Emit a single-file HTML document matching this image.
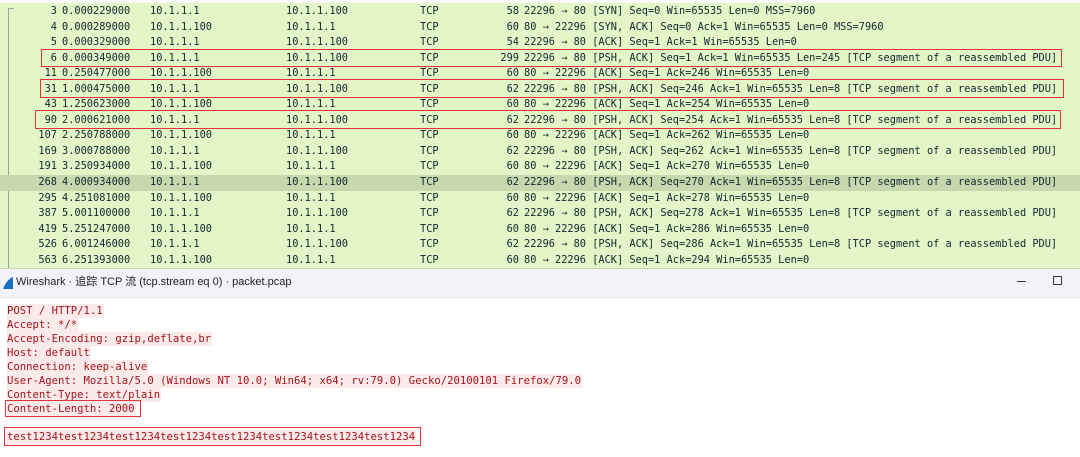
<!DOCTYPE html>
<html><head><meta charset="utf-8"><style>
body{margin:0;width:1080px;height:456px;overflow:hidden;background:#fff;position:relative;font-family:"DejaVu Sans Mono","Liberation Mono",monospace;}
#top{position:absolute;left:0;top:0;width:1080px;height:268px;background:#e3f6c8;border-bottom:1px solid #c8d2bc}
#hdr{position:absolute;left:0;top:0;width:1080px;height:3px;background:#fafafa}
#rows{position:absolute;left:0;top:2px;width:1080px;height:266px}
.r{position:absolute;left:0;width:1080px;height:15.5px;font-size:10.3px;line-height:15.5px;color:#12272e;white-space:pre}
.r span{position:absolute;top:0}
.n{right:1023px;text-align:right}
.t{left:62px}.s{left:150px}.d{left:286px}.p{left:420px}
.l{right:561px;text-align:right}.i{left:524px}
.hl{background:#c6d9ae}
.box{position:absolute;border:1.5px solid #e0333a;box-sizing:border-box}
#tree{position:absolute;left:8px;top:8px;width:1px;height:260px;background:#9aa49a}
#tree2{position:absolute;left:8px;top:8px;width:6px;height:1px;background:#9aa49a}
#title{position:absolute;left:0;top:269px;width:1080px;height:30px;background:#f1f3f9;font-family:"Liberation Sans","Noto Sans CJK SC",sans-serif;font-size:11px;color:#222}
#title .tx{position:absolute;left:16px;top:4px}
.ln{position:absolute;left:7px;font-size:10.6px;line-height:14px;height:14px;color:#a3141c;background:#fbeaea;white-space:pre;padding-right:1px}
#bot{position:absolute;left:0;top:1px;width:1080px;height:456px}
</style></head><body>
<div id="top"></div><div id="hdr"></div>
<div id="tree"></div><div id="tree2"></div>
<div id="rows">
<div class="r" style="top:2px"><span class="n">3</span><span class="t">0.000229000</span><span class="s">10.1.1.1</span><span class="d">10.1.1.100</span><span class="p">TCP</span><span class="l">58</span><span class="i">22296 → 80 [SYN] Seq=0 Win=65535 Len=0 MSS=7960</span></div>
<div class="r" style="top:17.5px"><span class="n">4</span><span class="t">0.000289000</span><span class="s">10.1.1.100</span><span class="d">10.1.1.1</span><span class="p">TCP</span><span class="l">60</span><span class="i">80 → 22296 [SYN, ACK] Seq=0 Ack=1 Win=65535 Len=0 MSS=7960</span></div>
<div class="r" style="top:33px"><span class="n">5</span><span class="t">0.000329000</span><span class="s">10.1.1.1</span><span class="d">10.1.1.100</span><span class="p">TCP</span><span class="l">54</span><span class="i">22296 → 80 [ACK] Seq=1 Ack=1 Win=65535 Len=0</span></div>
<div class="r" style="top:48.5px"><span class="n">6</span><span class="t">0.000349000</span><span class="s">10.1.1.1</span><span class="d">10.1.1.100</span><span class="p">TCP</span><span class="l">299</span><span class="i">22296 → 80 [PSH, ACK] Seq=1 Ack=1 Win=65535 Len=245 [TCP segment of a reassembled PDU]</span></div>
<div class="r" style="top:64px"><span class="n">11</span><span class="t">0.250477000</span><span class="s">10.1.1.100</span><span class="d">10.1.1.1</span><span class="p">TCP</span><span class="l">60</span><span class="i">80 → 22296 [ACK] Seq=1 Ack=246 Win=65535 Len=0</span></div>
<div class="r" style="top:79.5px"><span class="n">31</span><span class="t">1.000475000</span><span class="s">10.1.1.1</span><span class="d">10.1.1.100</span><span class="p">TCP</span><span class="l">62</span><span class="i">22296 → 80 [PSH, ACK] Seq=246 Ack=1 Win=65535 Len=8 [TCP segment of a reassembled PDU]</span></div>
<div class="r" style="top:95px"><span class="n">43</span><span class="t">1.250623000</span><span class="s">10.1.1.100</span><span class="d">10.1.1.1</span><span class="p">TCP</span><span class="l">60</span><span class="i">80 → 22296 [ACK] Seq=1 Ack=254 Win=65535 Len=0</span></div>
<div class="r" style="top:110.5px"><span class="n">90</span><span class="t">2.000621000</span><span class="s">10.1.1.1</span><span class="d">10.1.1.100</span><span class="p">TCP</span><span class="l">62</span><span class="i">22296 → 80 [PSH, ACK] Seq=254 Ack=1 Win=65535 Len=8 [TCP segment of a reassembled PDU]</span></div>
<div class="r" style="top:126px"><span class="n">107</span><span class="t">2.250788000</span><span class="s">10.1.1.100</span><span class="d">10.1.1.1</span><span class="p">TCP</span><span class="l">60</span><span class="i">80 → 22296 [ACK] Seq=1 Ack=262 Win=65535 Len=0</span></div>
<div class="r" style="top:141.5px"><span class="n">169</span><span class="t">3.000788000</span><span class="s">10.1.1.1</span><span class="d">10.1.1.100</span><span class="p">TCP</span><span class="l">62</span><span class="i">22296 → 80 [PSH, ACK] Seq=262 Ack=1 Win=65535 Len=8 [TCP segment of a reassembled PDU]</span></div>
<div class="r" style="top:157px"><span class="n">191</span><span class="t">3.250934000</span><span class="s">10.1.1.100</span><span class="d">10.1.1.1</span><span class="p">TCP</span><span class="l">60</span><span class="i">80 → 22296 [ACK] Seq=1 Ack=270 Win=65535 Len=0</span></div>
<div class="r hl" style="top:172.5px;height:16px"><span class="n">268</span><span class="t">4.000934000</span><span class="s">10.1.1.1</span><span class="d">10.1.1.100</span><span class="p">TCP</span><span class="l">62</span><span class="i">22296 → 80 [PSH, ACK] Seq=270 Ack=1 Win=65535 Len=8 [TCP segment of a reassembled PDU]</span></div>
<div class="r" style="top:188.5px"><span class="n">295</span><span class="t">4.251081000</span><span class="s">10.1.1.100</span><span class="d">10.1.1.1</span><span class="p">TCP</span><span class="l">60</span><span class="i">80 → 22296 [ACK] Seq=1 Ack=278 Win=65535 Len=0</span></div>
<div class="r" style="top:204px"><span class="n">387</span><span class="t">5.001100000</span><span class="s">10.1.1.1</span><span class="d">10.1.1.100</span><span class="p">TCP</span><span class="l">62</span><span class="i">22296 → 80 [PSH, ACK] Seq=278 Ack=1 Win=65535 Len=8 [TCP segment of a reassembled PDU]</span></div>
<div class="r" style="top:219.5px"><span class="n">419</span><span class="t">5.251247000</span><span class="s">10.1.1.100</span><span class="d">10.1.1.1</span><span class="p">TCP</span><span class="l">60</span><span class="i">80 → 22296 [ACK] Seq=1 Ack=286 Win=65535 Len=0</span></div>
<div class="r" style="top:235px"><span class="n">526</span><span class="t">6.001246000</span><span class="s">10.1.1.1</span><span class="d">10.1.1.100</span><span class="p">TCP</span><span class="l">62</span><span class="i">22296 → 80 [PSH, ACK] Seq=286 Ack=1 Win=65535 Len=8 [TCP segment of a reassembled PDU]</span></div>
<div class="r" style="top:250.5px"><span class="n">563</span><span class="t">6.251393000</span><span class="s">10.1.1.100</span><span class="d">10.1.1.1</span><span class="p">TCP</span><span class="l">60</span><span class="i">80 → 22296 [ACK] Seq=1 Ack=294 Win=65535 Len=0</span></div>
</div>
<div class="box" style="left:41px;top:49px;width:1021px;height:18px"></div>
<div class="box" style="left:40px;top:79px;width:1024px;height:19px"></div>
<div class="box" style="left:35px;top:110px;width:1026px;height:19px"></div>

<div id="title">
<svg style="position:absolute;left:2px;top:7px" width="12" height="14" viewBox="0 0 12 14"><path d="M11 1 C6 3 3 8 1 13 L11 13 Z" fill="#1d6fc4"/></svg>
<span class="tx">Wireshark · 追踪 TCP 流 (tcp.stream eq 0) · packet.pcap</span>
<div style="position:absolute;left:1017px;top:12px;width:9px;height:1px;background:#333"></div>
<div style="position:absolute;left:1053px;top:7px;width:7px;height:7px;border:1px solid #333;border-radius:1px"></div>
</div>

<div id="bot">
<div class="ln" style="top:303px">POST / HTTP/1.1</div>
<div class="ln" style="top:317px">Accept: */*</div>
<div class="ln" style="top:331px">Accept-Encoding: gzip,deflate,br</div>
<div class="ln" style="top:345px">Host: default</div>
<div class="ln" style="top:359px">Connection: keep-alive</div>
<div class="ln" style="top:373px">User-Agent: Mozilla/5.0 (Windows NT 10.0; Win64; x64; rv:79.0) Gecko/20100101 Firefox/79.0</div>
<div class="ln" style="top:387px">Content-Type: text/plain</div>
<div class="ln" style="top:401px">Content-Length: 2000</div>
<div class="ln" style="top:429px">test1234test1234test1234test1234test1234test1234test1234test1234</div>
</div>
<div class="box" style="left:5px;top:400px;width:136px;height:17px"></div>
<div class="box" style="left:4px;top:427px;width:417px;height:19px"></div>
</body></html>
